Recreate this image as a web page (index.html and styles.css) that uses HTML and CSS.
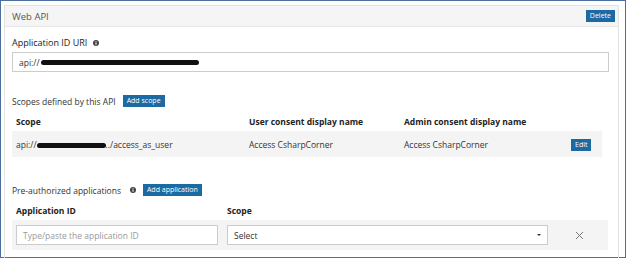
FILE: index.html
```html
<!DOCTYPE html>
<html lang="en">
<head>
    <meta charset="UTF-8">
    <title>Web API</title>
    <link rel="stylesheet" href="styles.css">
</head>
<body>
    <div class="frame">
        <div class="panel">
            <!-- Header -->
            <div class="panel-header">
                <span class="title">Web API</span>
                <button class="btn">Delete</button>
            </div>

            <div class="panel-body">
                <div class="label">
                    Application ID URI
                    <svg class="info" width="6" height="6" viewBox="0 0 6 6"><circle cx="3" cy="3" r="3" fill="#444"/><rect x="2.5" y="2.4" width="1" height="2.4" fill="#fff"/><rect x="2.5" y="1.1" width="1" height="0.8" fill="#fff"/></svg>
                </div>
                <div class="text-input uri">api://<span class="redact long"></span></div>

                <div class="section-line scopes">
                    <span>Scopes defined by this API</span>
                    <button class="btn">Add scope</button>
                </div>

                <!-- Scopes table -->
                <div class="grid scope-grid head">
                    <div>Scope</div>
                    <div>User consent display name</div>
                    <div>Admin consent display name</div>
                    <div></div>
                </div>
                <div class="grid scope-grid row">
                    <div>api://<span class="redact short"></span>../access_as_user</div>
                    <div>Access CsharpCorner</div>
                    <div>Access CsharpCorner</div>
                    <div><button class="btn">Edit</button></div>
                </div>

                <div class="section-line preauth">
                    <span>Pre-authorized applications</span>
                    <svg class="info" width="6" height="6" viewBox="0 0 6 6"><circle cx="3" cy="3" r="3" fill="#444"/><rect x="2.5" y="2.4" width="1" height="2.4" fill="#fff"/><rect x="2.5" y="1.1" width="1" height="0.8" fill="#fff"/></svg>
                    <button class="btn">Add application</button>
                </div>

                <!-- Pre-authorized apps -->
                <div class="grid app-grid head">
                    <div>Application ID</div>
                    <div>Scope</div>
                    <div></div>
                </div>
                <div class="grid app-grid row">
                    <div class="text-input placeholder">Type/paste the application ID</div>
                    <div class="text-input select">Select <span class="caret"></span></div>
                    <div class="remove">
                        <svg width="9" height="9" viewBox="0 0 9 9"><path d="M1 1L8 8M8 1L1 8" stroke="#777" stroke-width="1"/></svg>
                    </div>
                </div>
            </div>
        </div>
    </div>
</body>
</html>
```

FILE: styles.css
```css
html, body {
    margin: 0;
    padding: 0;
    background: #fff;
}

body {
    font-family: 'Open Sans', 'Noto Sans', sans-serif;
    font-size: 8.5px;
    color: #333;
}

.frame {
    width: 626px;
    height: 258px;
    box-sizing: border-box;
    border: 1px solid #4d6f9e;
    padding: 4px 6px 0 3px;
}

.panel {
    border: 1px solid #e3e3e3;
    border-bottom: none;
    height: 253px;
    box-sizing: border-box;
}

.panel-header {
    display: flex;
    justify-content: space-between;
    align-items: center;
    height: 20px;
    background: #f5f5f5;
    border-bottom: 1px solid #e6e6e6;
    padding: 0 3px 0 7px;
}

.title {
    font-size: 9.5px;
    color: #555;
}

.btn {
    font-family: inherit;
    font-size: 7px;
    background: #1c6aa3;
    color: #fff;
    border: none;
    padding: 1px 4px;
    line-height: 10px;
}

.panel-body {
    padding: 0 7px;
}

.label {
    margin-top: 9px;
    font-size: 9px;
    color: #222;
    display: flex;
    align-items: center;
    gap: 6px;
}

.info {
    display: block;
}

.text-input {
    border: 1px solid #ccc;
    background: #fff;
    height: 20px;
    box-sizing: border-box;
    display: flex;
    align-items: center;
    padding-left: 6px;
    color: #333;
}

.uri {
    margin-top: 3px;
    margin-right: 2px;
}

.redact {
    display: inline-block;
    background: #111;
    border-radius: 3px;
}

.redact.long {
    width: 158px;
    height: 5px;
    margin-left: 1px;
}

.redact.short {
    width: 69px;
    height: 5px;
}

.section-line {
    display: flex;
    align-items: center;
    gap: 7px;
}

.section-line.scopes {
    margin-top: 23px;
}

.section-line.preauth {
    margin-top: 27px;
}

.section-line.preauth .info {
    margin-left: 2px;
}

.grid {
    display: grid;
    align-items: center;
}

.scope-grid {
    grid-template-columns: 233px 155px 167px 35px;
    padding-left: 4px;
    margin-right: 9px;
}

.scope-grid.head {
    margin-top: 5px;
    height: 18px;
    font-weight: 700;
    color: #222;
}

.scope-grid.row {
    margin-top: 1px;
    background: #f4f4f4;
    height: 26px;
}

.app-grid {
    grid-template-columns: 211px 321px 63px;
    padding-left: 4px;
    margin-right: 3px;
}

.app-grid.head {
    margin-top: 5px;
    height: 18px;
    font-weight: 700;
    color: #222;
}

.app-grid.row {
    margin-top: 1px;
    background: #f4f4f4;
    height: 30px;
}

.placeholder {
    color: #999;
    width: 202px;
}

.select {
    justify-content: space-between;
    padding-right: 6px;
}

.caret {
    width: 0;
    height: 0;
    border-left: 2px solid transparent;
    border-right: 2px solid transparent;
    border-top: 2px solid #333;
}

.remove {
    display: flex;
    justify-content: center;
}
```
